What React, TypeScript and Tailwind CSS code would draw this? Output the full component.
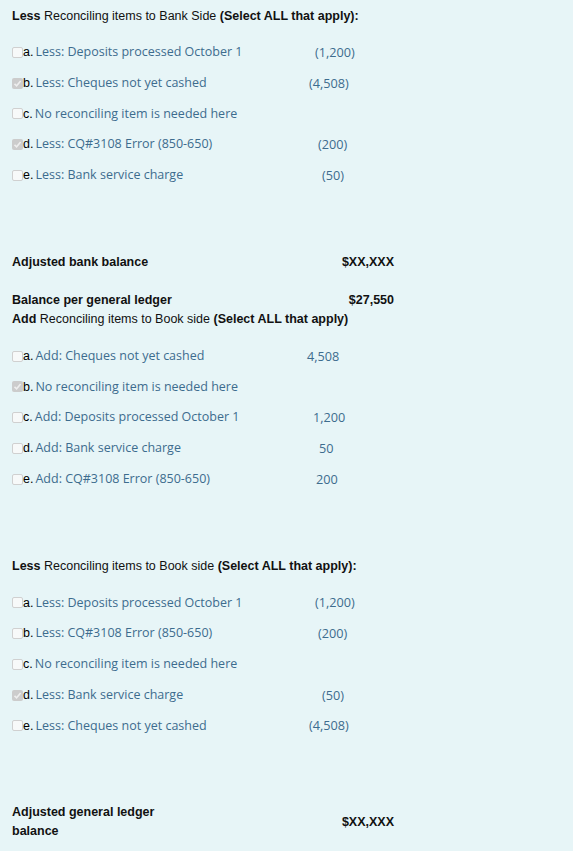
import React from "react";

type Opt = { l: string; t: string; amt?: string; pad?: number; checked?: boolean };

const padClass: Record<number, string> = {
  7: "pl-[7px]",
  9: "pl-[9px]",
  13: "pl-[13px]",
  15: "pl-[15px]",
  16: "pl-[16px]",
  18: "pl-[18px]",
  19: "pl-[19px]",
  22: "pl-[22px]",
};

function Box({ checked }: { checked?: boolean }) {
  return checked ? (
    <span className="flex h-[11px] w-[11px] items-center justify-center rounded-[2px] bg-[#cccccc]">
      <svg width="9" height="9" viewBox="0 0 9 9">
        <path d="M1.5 4.8 L3.6 6.8 L7.6 2" fill="none" stroke="#eeeeee" strokeWidth="1.6" />
      </svg>
    </span>
  ) : (
    <span className="h-[11px] w-[11px] rounded-[2px] border border-[#d0d0d0] bg-[#f7f9f9]" />
  );
}

function Options({ items }: { items: Opt[] }) {
  return (
    <div className="flex flex-col">
      {items.map((o) => (
        <div key={o.l} className="flex h-[30.75px] items-center">
          <div className="flex w-[288px] items-center">
            <Box checked={o.checked} />
            <span className="font-['Liberation_Sans',Arial,sans-serif] text-[12.5px] text-black">{o.l}.</span>
            <span className="ml-[2px] font-['Open_Sans',sans-serif] text-[12.5px] text-[#3d6c8e]">{o.t}</span>
          </div>
          {o.amt && (
            <span className={`font-['Open_Sans',sans-serif] text-[12.7px] text-[#3d6c8e] ${padClass[o.pad ?? 0] ?? ""}`}>
              {o.amt}
            </span>
          )}
        </div>
      ))}
    </div>
  );
}

export default function App() {
  const arial = "font-['Liberation_Sans',Arial,sans-serif] text-[12.5px] leading-[19px] text-[#111]";
  return (
    <div className="min-h-[851px] w-[573px] bg-[#e7f5f7] pl-[12px] pt-[7px]">
      <div className={arial}>
        <b>Less</b> Reconciling items to Bank Side <b>(Select ALL that apply):</b>
      </div>
      <div className="mt-[11px]">
        <Options
          items={[
            { l: "a", t: "Less: Deposits processed October 1", amt: "(1,200)", pad: 15 },
            { l: "b", t: "Less: Cheques not yet cashed", amt: "(4,508)", pad: 9, checked: true },
            { l: "c", t: "No reconciling item is needed here" },
            { l: "d", t: "Less: CQ#3108 Error (850-650)", amt: "(200)", pad: 18, checked: true },
            { l: "e", t: "Less: Bank service charge", amt: "(50)", pad: 22 },
          ]}
        />
      </div>
      <div className={`${arial} mt-[62px] flex w-[382px] justify-between font-bold`}>
        <span>Adjusted bank balance</span>
        <span>$XX,XXX</span>
      </div>
      <div className={`${arial} mt-[19px] flex w-[382px] justify-between font-bold`}>
        <span>Balance per general ledger</span>
        <span>$27,550</span>
      </div>
      <div className={arial}>
        <b>Add</b> Reconciling items to Book side <b>(Select ALL that apply)</b>
      </div>
      <div className="mt-[12px]">
        <Options
          items={[
            { l: "a", t: "Add: Cheques not yet cashed", amt: "4,508", pad: 7 },
            { l: "b", t: "No reconciling item is needed here", checked: true },
            { l: "c", t: "Add: Deposits processed October 1", amt: "1,200", pad: 13 },
            { l: "d", t: "Add: Bank service charge", amt: "50", pad: 19 },
            { l: "e", t: "Add: CQ#3108 Error (850-650)", amt: "200", pad: 16 },
          ]}
        />
      </div>
      <div className={`${arial} mt-[62px]`}>
        <b>Less</b> Reconciling items to Book side <b>(Select ALL that apply):</b>
      </div>
      <div className="mt-[12px]">
        <Options
          items={[
            { l: "a", t: "Less: Deposits processed October 1", amt: "(1,200)", pad: 15 },
            { l: "b", t: "Less: CQ#3108 Error (850-650)", amt: "(200)", pad: 18 },
            { l: "c", t: "No reconciling item is needed here" },
            { l: "d", t: "Less: Bank service charge", amt: "(50)", pad: 22, checked: true },
            { l: "e", t: "Less: Cheques not yet cashed", amt: "(4,508)", pad: 9 },
          ]}
        />
      </div>
      <div className={`${arial} mt-[62px] flex w-[382px] items-center justify-between font-bold`}>
        <span className="w-[150px]">Adjusted general ledger balance</span>
        <span>$XX,XXX</span>
      </div>
    </div>
  );
}
